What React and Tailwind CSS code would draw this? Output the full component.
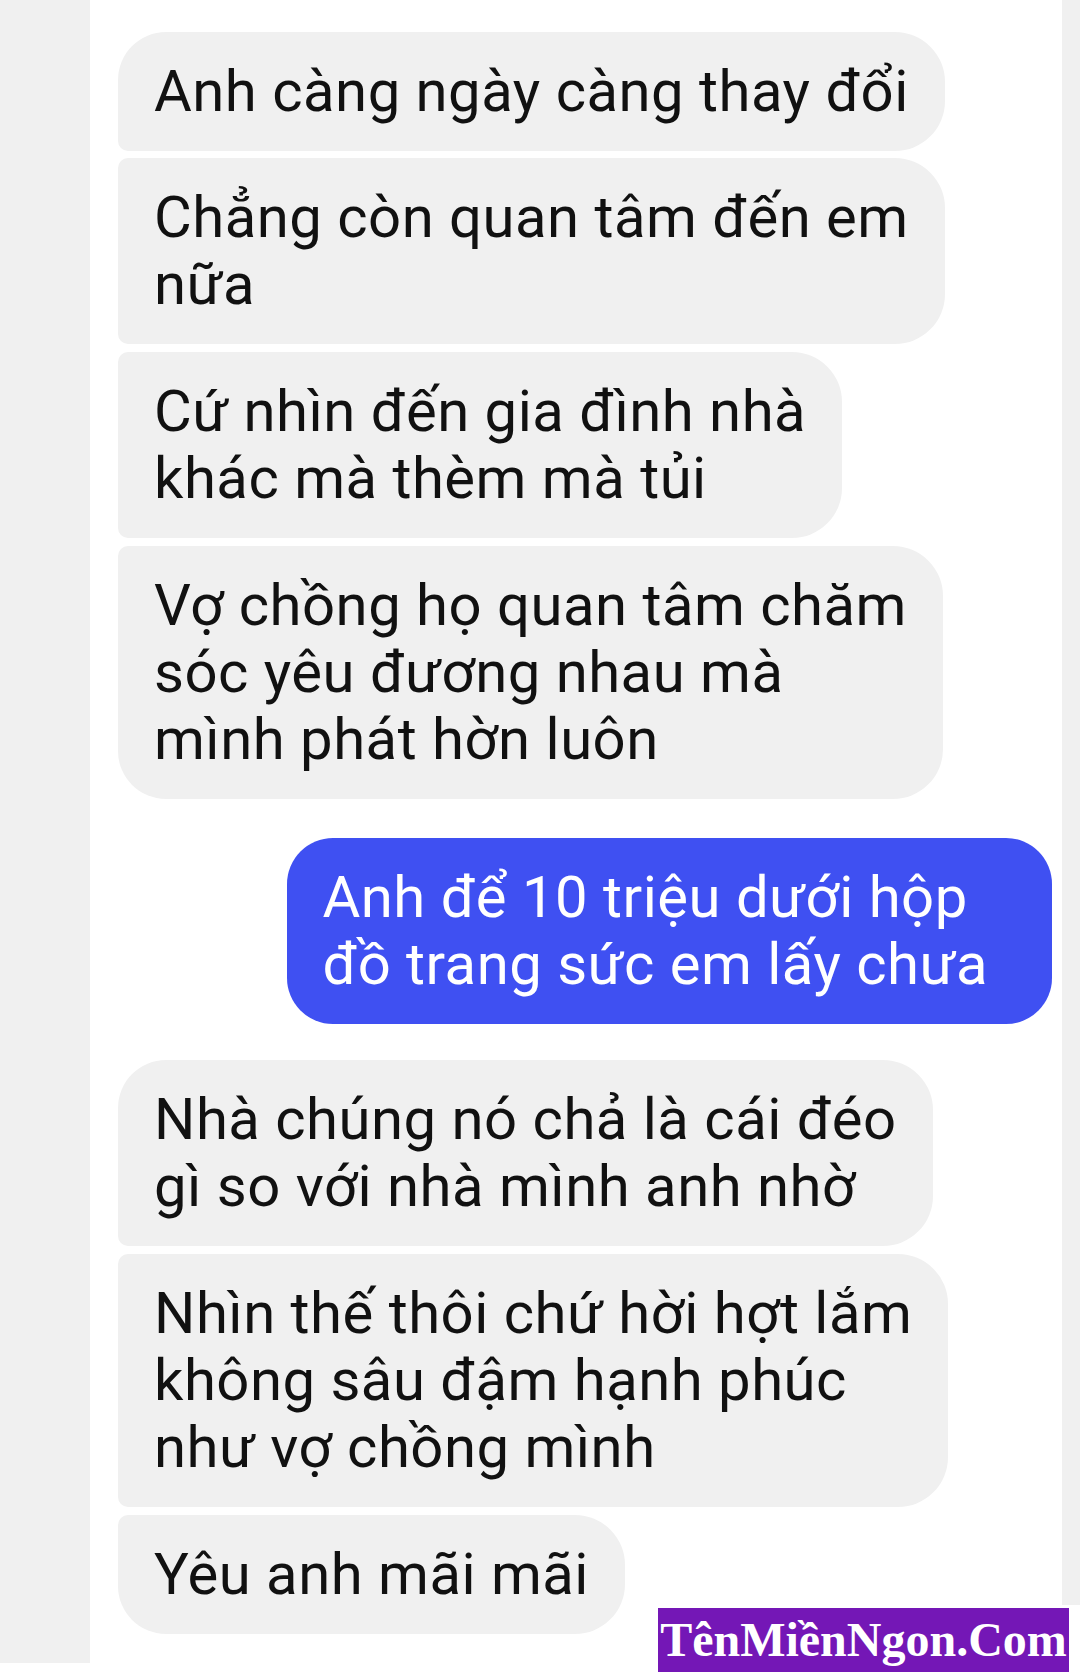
import React from "react";

const font = "font-['Roboto','Noto_Sans',sans-serif]";

function Recv({ lines, pos, className = "" }) {
  let radius = "rounded-r-[50px] rounded-l-[10px]";
  if (pos === "first") radius = "rounded-r-[50px] rounded-tl-[48px] rounded-bl-[10px]";
  if (pos === "last") radius = "rounded-r-[50px] rounded-tl-[10px] rounded-bl-[48px]";
  return (
    <div
      className={`self-start bg-[#f0f0f0] text-[#111111] px-[36px] py-[26px] text-[58px] tracking-[0.5px] leading-[67px] whitespace-nowrap ${radius} ${className}`}
    >
      {lines.map((l, i) => (
        <div key={i}>{l}</div>
      ))}
    </div>
  );
}

export default function App() {
  return (
    <div className={`relative w-[1080px] h-[1680px] bg-white flex items-start overflow-hidden ${font}`}>
      <div className="w-[90px] h-[1663px] bg-[#f0f0f0] shrink-0" />
      <div className="flex-1 flex flex-col pt-[32px] pl-[28px] pr-[10px]">
        <Recv pos="first" lines={["Anh càng ngày càng thay đổi"]} />
        <Recv className="mt-[7px]" lines={["Chẳng còn quan tâm đến em", "nữa"]} />
        <Recv className="mt-[8px]" lines={["Cứ nhìn đến gia đình nhà", "khác mà thèm mà tủi"]} />
        <Recv
          className="mt-[8px]"
          pos="last"
          lines={["Vợ chồng họ quan tâm chăm", "sóc yêu đương nhau mà", "mình phát hờn luôn"]}
        />
        <div className="self-end mt-[39px] bg-[#3f50f2] text-white rounded-[46px] pl-[35px] pr-[64px] py-[26px] text-[58px] tracking-[0.5px] leading-[67px] whitespace-nowrap">
          <div>Anh để 10 triệu dưới hộp</div>
          <div>đồ trang sức em lấy chưa</div>
        </div>
        <Recv
          className="mt-[36px]"
          pos="first"
          lines={["Nhà chúng nó chả là cái đéo", "gì so với nhà mình anh nhờ"]}
        />
        <Recv
          className="mt-[8px]"
          lines={["Nhìn thế thôi chứ hời hợt lắm", "không sâu đậm hạnh phúc", "như vợ chồng mình"]}
        />
        <Recv className="mt-[8px]" pos="last" lines={["Yêu anh mãi mãi"]} />
      </div>
      <div className="w-[18px] h-[1605px] bg-[#f0f0f0] shrink-0" />
      <div className="absolute left-[658px] top-[1608px] w-[411px] h-[64px] bg-[#7417b6] flex items-center justify-center">
        <span className="font-['Liberation_Serif',serif] font-bold text-[48px] leading-none text-white whitespace-nowrap">
          TênMiềnNgon.Com
        </span>
      </div>
    </div>
  );
}
